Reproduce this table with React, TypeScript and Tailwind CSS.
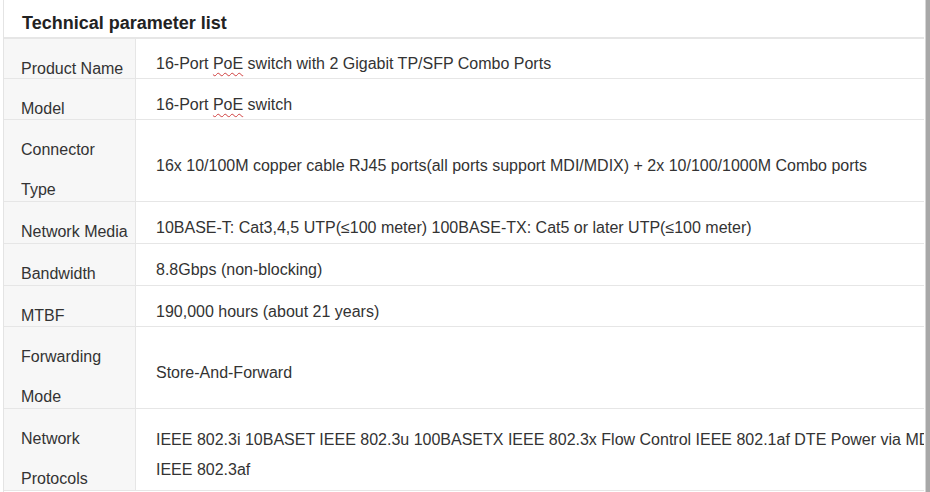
const rows: { label: string[]; value: React.ReactNode; h: string }[] = [
  {
    label: ["Product Name"],
    value: (
      <>
        16-Port <Squiggle>PoE</Squiggle> switch with 2 Gigabit TP/SFP Combo Ports
      </>
    ),
    h: "h-[40px]",
  },
  {
    label: ["Model"],
    value: (
      <>
        16-Port <Squiggle>PoE</Squiggle> switch
      </>
    ),
    h: "h-[41px]",
  },
  {
    label: ["Connector", "Type"],
    value:
      "16x 10/100M copper cable RJ45 ports(all ports support MDI/MDIX) + 2x 10/100/1000M Combo ports",
    h: "h-[82px]",
  },
  {
    label: ["Network Media"],
    value: "10BASE-T: Cat3,4,5 UTP(≤100 meter) 100BASE-TX: Cat5 or later UTP(≤100 meter)",
    h: "h-[42px]",
  },
  { label: ["Bandwidth"], value: "8.8Gbps (non-blocking)", h: "h-[42px]" },
  { label: ["MTBF"], value: "190,000 hours (about 21 years)", h: "h-[41px]" },
  { label: ["Forwarding", "Mode"], value: "Store-And-Forward", h: "h-[82px]" },
  {
    label: ["Network", "Protocols"],
    value: (
      <>
        IEEE 802.3i 10BASET IEEE 802.3u 100BASETX IEEE 802.3x Flow Control IEEE 802.1af DTE Power via MDI
        <br />
        IEEE 802.3af
      </>
    ),
    h: "h-[82px]",
  },
]

function Squiggle({ children }: { children: React.ReactNode }) {
  return (
    <span className="underline decoration-wavy decoration-[#d04040] decoration-1 underline-offset-[3px]">
      {children}
    </span>
  )
}

export default function App() {
  return (
    <div className="flex h-[492px] w-[930px] overflow-hidden bg-white font-['Liberation_Sans',Arial,sans-serif] text-[16px] text-[#333]">
      <div className="ml-[3px] w-[922px] overflow-hidden border-l border-[#e4e4e4]">
        {/* Title */}
        <div className="flex h-[39px] items-center border-b-2 border-[#e6e6e6] pl-[18px] pt-[9px] text-[18px] font-bold text-[#222]">
          Technical parameter list
        </div>

        {/* Parameter rows */}
        {rows.map((r) => (
          <div key={r.label.join(" ")} className={`flex border-b border-[#e6e6e6] ${r.h}`}>
            <div className="w-[132px] shrink-0 border-r border-[#e6e6e6] bg-[#f7f7f7] pl-[17px] pt-[10px] leading-[40px]">
              {r.label.map((l) => (
                <div key={l} className="whitespace-nowrap">
                  {l}
                </div>
              ))}
            </div>
            <div className="flex flex-1 items-center whitespace-nowrap pl-[20px] pt-[11px] leading-[30px]">
              <div>{r.value}</div>
            </div>
          </div>
        ))}
      </div>

      {/* scrollbar edge */}
      <div className="ml-[1px] h-full w-[1px] bg-[#d6d6d6]" />
      <div className="h-full w-[4px] bg-[#a8a8a8]" />
    </div>
  )
}
